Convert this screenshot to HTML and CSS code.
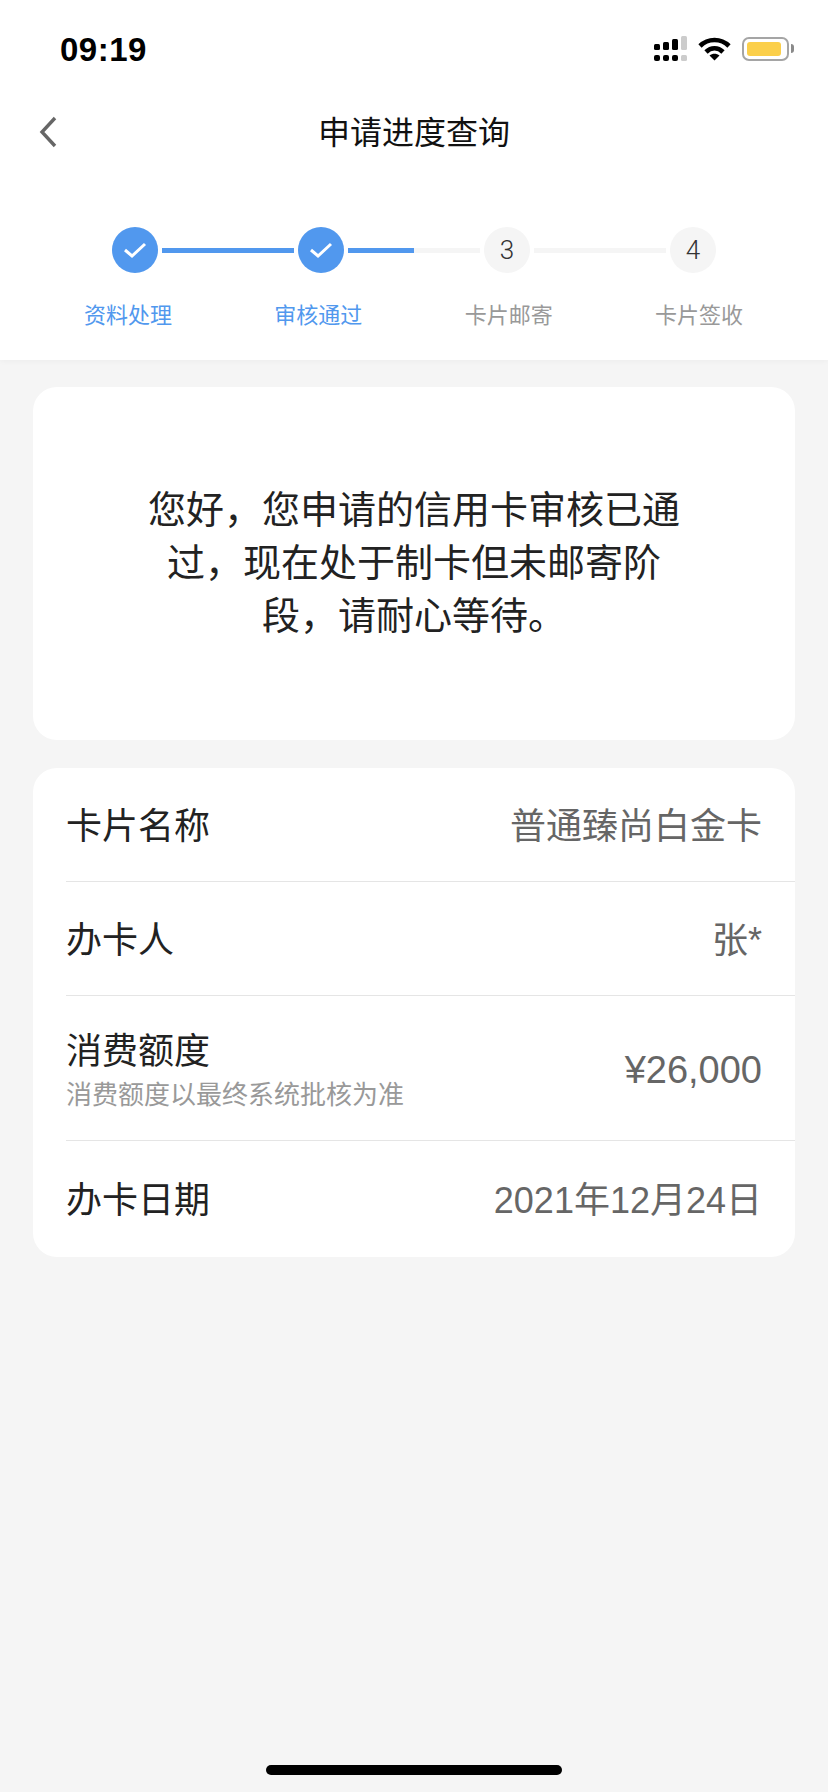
FILE: index.html
```html
<!DOCTYPE html>
<html lang="zh-CN">
<head>
  <meta charset="UTF-8">
  <title>申请进度查询</title>
  <link rel="stylesheet" href="styles.css">
</head>
<body>

<div class="top">
  <div class="status">
    <span class="time">09:19</span>
    <div class="status-icons">
      <svg class="signal" width="33" height="26" viewBox="0 0 33 26">
        <rect x="0" y="8" width="6" height="6" rx="1.5" fill="#000"/>
        <rect x="9" y="6" width="6" height="8" rx="1.5" fill="#000"/>
        <rect x="18" y="3" width="6" height="11" rx="1.5" fill="#000"/>
        <rect x="27" y="0" width="6" height="14" rx="1.5" fill="#ccc"/>
        <rect x="0" y="19" width="6" height="6" rx="2" fill="#000"/>
        <rect x="9" y="19" width="6" height="6" rx="2" fill="#000"/>
        <rect x="18" y="19" width="6" height="6" rx="2" fill="#000"/>
        <rect x="27" y="19" width="6" height="6" rx="1.5" fill="#ccc"/>
      </svg>
      <svg class="wifi" width="33" height="24" viewBox="0 0 33 24">
        <path d="M2 9 C10 1 23 1 31 9" fill="none" stroke="#000" stroke-width="4.6"/>
        <path d="M8 15 C13 10 20 10 25 15" fill="none" stroke="#000" stroke-width="4.6"/>
        <path d="M11.5 18.5 C14.5 16 18.5 16 21.5 18.5 L16.5 23.5 Z" fill="#000"/>
      </svg>
      <div class="battery">
        <div class="battery-body"><div class="battery-fill"></div></div>
        <div class="battery-nub"></div>
      </div>
    </div>
  </div>

  <div class="nav">
    <svg class="back" width="20" height="32" viewBox="0 0 20 32">
      <path d="M17 2 L4 16 L17 30" fill="none" stroke="#666" stroke-width="3.4"/>
    </svg>
    <h1>申请进度查询</h1>
  </div>

  <div class="steps">
    <div class="circle done">
      <svg width="24" height="18" viewBox="0 0 24 18"><path d="M2 9 L9 15 L22 3" fill="none" stroke="#fff" stroke-width="3"/></svg>
    </div>
    <div class="line done"></div>
    <div class="circle done">
      <svg width="24" height="18" viewBox="0 0 24 18"><path d="M2 9 L9 15 L22 3" fill="none" stroke="#fff" stroke-width="3"/></svg>
    </div>
    <div class="line half"></div>
    <div class="circle">3</div>
    <div class="line"></div>
    <div class="circle">4</div>
  </div>
  <div class="labels">
    <span class="on">资料处理</span>
    <span class="on">审核通过</span>
    <span>卡片邮寄</span>
    <span>卡片签收</span>
  </div>
</div>

<div class="card message">
  <p>您好，您申请的信用卡审核已通过，现在处于制卡但未邮寄阶段，请耐心等待。</p>
</div>

<div class="card info">
  <div class="row">
    <span class="name">卡片名称</span>
    <span class="value">普通臻尚白金卡</span>
  </div>
  <div class="row">
    <span class="name">办卡人</span>
    <span class="value">张*</span>
  </div>
  <div class="row tall">
    <div>
      <div class="name">消费额度</div>
      <div class="hint">消费额度以最终系统批核为准</div>
    </div>
    <span class="value amount">¥26,000</span>
  </div>
  <div class="row last">
    <span class="name">办卡日期</span>
    <span class="value">2021年12月24日</span>
  </div>
</div>

<div class="home-bar"></div>

</body>
</html>
```

FILE: styles.css
```css
* {
  box-sizing: border-box;
}
body {
  margin: 0;
  height: 1792px;
  overflow: hidden;
  display: flex;
  flex-direction: column;
  background-color: #f5f5f5;
  font-family: "Liberation Sans", "Noto Sans CJK SC", sans-serif;
  color: #222;
}
.top {
  height: 360px;
  background-color: #fff;
  box-shadow: 0 1px 6px rgba(0,0,0,0.04);
}
.status {
  height: 100px;
  padding: 0 34px 0 60px;
  display: flex;
  justify-content: space-between;
  align-items: center;
}
.time {
  font-size: 33px;
  font-weight: bold;
  letter-spacing: 0.5px;
  color: #000;
}
.status-icons {
  display: flex;
  align-items: center;
  gap: 11px;
  margin-bottom: 3px;
}
.battery {
  display: flex;
  align-items: center;
  gap: 2px;
}
.battery-body {
  width: 47px;
  height: 24px;
  padding: 3px;
  border: 2px solid #a5a5a5;
  border-radius: 7px;
}
.battery-fill {
  width: 34px;
  height: 100%;
  background-color: #fbcf4a;
  border-radius: 3px;
}
.battery-nub {
  width: 3px;
  height: 9px;
  background-color: #8a8a8a;
  border-radius: 0 3px 3px 0;
}
.nav {
  height: 60px;
  position: relative;
  display: flex;
  align-items: center;
  justify-content: center;
}
.back {
  position: absolute;
  left: 38px;
  top: 16px;
}
h1 {
  margin: 0;
  font-size: 32px;
  font-weight: normal;
  color: #111;
}
.steps {
  margin-top: 67px;
  padding-left: 112px;
  display: flex;
  align-items: center;
  gap: 4px;
}
.circle {
  width: 46px;
  height: 46px;
  flex: none;
  border-radius: 50%;
  background-color: #f5f5f5;
  color: #333;
  font-family: Roboto, sans-serif;
  font-size: 26px;
  font-weight: 300;
  display: flex;
  justify-content: center;
  align-items: center;
}
.circle.done {
  background-color: #5198ee;
}
.line {
  width: 132px;
  height: 5px;
  background-color: #f5f5f5;
}
.line.done {
  background-color: #5198ee;
}
.line.half {
  background: linear-gradient(to right, #5198ee 50%, #f5f5f5 50%);
}
.labels {
  margin-top: 24px;
  padding: 0 85px 0 84px;
  display: flex;
  justify-content: space-between;
  font-size: 22px;
  color: #999;
}
.labels .on {
  color: #5198ee;
}
.card {
  margin: 0 33px;
  background-color: #fff;
  border-radius: 24px;
}
.message {
  margin-top: 27px;
  height: 353px;
  padding: 0 111px;
  display: flex;
  align-items: center;
}
.message p {
  margin: 0;
  font-size: 38px;
  line-height: 53px;
  text-align: center;
  color: #222;
}
.info {
  margin-top: 28px;
  padding-left: 33px;
}
.row {
  height: 114px;
  padding-right: 33px;
  border-bottom: 1px solid #e5e5e5;
  display: flex;
  justify-content: space-between;
  align-items: center;
}
.row.tall {
  height: 145px;
}
.row.last {
  height: 116px;
  border-bottom: none;
}
.name {
  font-size: 36px;
  line-height: 50px;
  color: #222;
  padding-top: 4px;
}
.value {
  font-size: 36px;
  line-height: 50px;
  color: #666;
  padding-top: 4px;
}
.amount {
  font-size: 38px;
}
.hint {
  font-size: 26px;
  line-height: 36px;
  color: #999;
}
.home-bar {
  position: absolute;
  left: 266px;
  top: 1765px;
  width: 296px;
  height: 10px;
  border-radius: 5px;
  background-color: #000;
}
```
